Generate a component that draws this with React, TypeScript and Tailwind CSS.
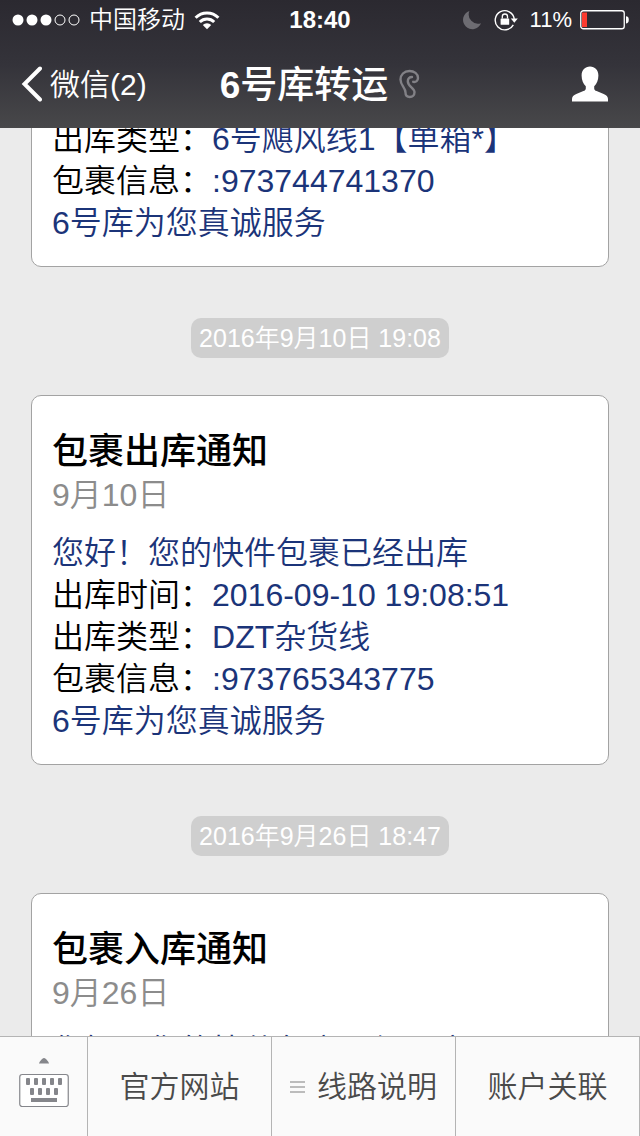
import type { ReactNode } from "react";

type Field = {
  label?: string;
  value: string;
};

type Notice = {
  id: string;
  title?: string;
  date?: string;
  time?: string;
  fields: Field[];
};

const notices: Notice[] = [
  {
    id: "n1",
    fields: [
      { label: "出库类型：", value: "6号飓风线1【单箱*】" },
      { label: "包裹信息：", value: ":973744741370" },
      { value: "6号库为您真诚服务" },
    ],
  },
  {
    id: "n2",
    time: "2016年9月10日 19:08",
    title: "包裹出库通知",
    date: "9月10日",
    fields: [
      { value: "您好！您的快件包裹已经出库" },
      { label: "出库时间：", value: "2016-09-10 19:08:51" },
      { label: "出库类型：", value: "DZT杂货线" },
      { label: "包裹信息：", value: ":973765343775" },
      { value: "6号库为您真诚服务" },
    ],
  },
  {
    id: "n3",
    time: "2016年9月26日 18:47",
    title: "包裹入库通知",
    date: "9月26日",
    fields: [{ value: "您好！您的快件包裹已经入库" }],
  },
];

function SignalDots() {
  return (
    <svg viewBox="0 0 68 12" className="h-3 w-[68px]" aria-hidden>
      <g fill="#fff">
        <circle cx="6" cy="6" r="5.5" />
        <circle cx="20" cy="6" r="5.5" />
        <circle cx="34" cy="6" r="5.5" />
      </g>
      <g fill="none" stroke="#fff" strokeWidth="1">
        <circle cx="48" cy="6" r="5" />
        <circle cx="62" cy="6" r="5" />
      </g>
    </svg>
  );
}

function WifiIcon() {
  return (
    <svg viewBox="0 0 26 20" className="h-5 w-[26px]" aria-hidden>
      <g fill="none" stroke="#fff" strokeWidth="3">
        <path d="M1.6 7.8a16 16 0 0 1 22.8 0" />
        <path d="M5.8 12a10.2 10.2 0 0 1 14.4 0" />
      </g>
      <path d="M8.8 15a6 6 0 0 1 8.4 0L13 19.2z" fill="#fff" />
    </svg>
  );
}

function MoonIcon() {
  return (
    <svg viewBox="0 0 20 20" className="mr-1 size-5" aria-hidden>
      <path
        d="M7.4 1A9.3 9.3 0 1 0 19 13.2 9.3 9.3 0 0 1 7.4 1z"
        fill="#6d6c72"
      />
    </svg>
  );
}

function RotationLockIcon() {
  return (
    <svg viewBox="0 0 24 22" className="h-[22px] w-6" aria-hidden>
      <path
        d="M19.3 15.8A9.6 9.6 0 1 1 20.3 9.8"
        fill="none"
        stroke="#fff"
        strokeWidth="1.4"
      />
      <path d="M16.8 9.6h7l-3.5 4.2z" fill="#fff" />
      <rect x="6.6" y="9.4" width="8.6" height="6.4" rx=".6" fill="#fff" />
      <path
        d="M8.3 9.6V7.6a2.6 2.6 0 0 1 5.2 0v2"
        fill="none"
        stroke="#fff"
        strokeWidth="1.3"
      />
    </svg>
  );
}

function BatteryIcon() {
  return (
    <svg viewBox="0 0 50 20" className="h-5 w-[50px]" aria-hidden>
      <rect
        x=".75"
        y=".75"
        width="43.5"
        height="18"
        rx="2.6"
        fill="none"
        stroke="#fff"
        strokeWidth="1.3"
      />
      <rect x="2" y="2.5" width="5" height="14.5" fill="#fb3b30" />
      <path d="M46 6.2c1.6 0 2.8.8 2.8 3.6s-1.2 3.6-2.8 3.6z" fill="#fff" />
    </svg>
  );
}

function EarIcon() {
  return (
    <svg viewBox="0 0 22 30" className="h-[30px] w-[22px]" aria-hidden>
      <path
        d="M15.2 12.8C18 13.4 20 11.600 20 9 20 4.800 16.200 2 11.500 2 6 2 2.500 5.800 2.500 10.500 2.500 16.500 7.500 18.500 7.500 23.500 7.500 26.500 9 28 11.800 28S16.500 26 16.500 23.300C16.500 19 9.800 17.500 9.800 12.200 9.800 9.500 11.500 8 14 8"
        fill="none"
        stroke="#828186"
        strokeWidth="2.4"
        strokeLinecap="round"
      />
    </svg>
  );
}

function PersonIcon() {
  return (
    <svg viewBox="0 0 36 36" className="size-9" aria-hidden>
      <path
        d="M18 .4c-4.900 0-8.400 3.600-8.400 9 0 4.600 1.700 8.700 4.200 10.800v2.200c0 1.300-.8 2-2.400 2.700L4.300 28C1.500 29.200 0 30.800 0 33v2.500h36V33c0-2.200-1.500-3.800-4.300-5l-7.100-2.900c-1.600-.7-2.400-1.400-2.400-2.700v-2.200c2.500-2.100 4.200-6.200 4.200-10.800 0-5.400-3.500-9-8.400-9z"
        fill="#fff"
      />
    </svg>
  );
}

function KeyboardIcon() {
  return (
    <svg viewBox="0 0 50 50" className="size-[50px]" aria-hidden>
      <path d="M20 6.500c0-1 3-5.500 5-5.500s5 4.500 5 5.500z" fill="#85868b" />
      <rect
        x=".75"
        y="17.500"
        width="48.500"
        height="32"
        rx="2.500"
        fill="#fff"
        stroke="#85868b"
        strokeWidth="1.200"
      />
      <g fill="#85868b">
        <rect x="7" y="21" width="4" height="7" rx="1" />
        <rect x="15" y="21" width="4" height="7" rx="1" />
        <rect x="23" y="21" width="4" height="7" rx="1" />
        <rect x="31" y="21" width="4" height="7" rx="1" />
        <rect x="39" y="21" width="4" height="7" rx="1" />
        <rect x="11" y="31" width="4" height="7" rx="1" />
        <rect x="19" y="31" width="4" height="7" rx="1" />
        <rect x="27" y="31" width="4" height="7" rx="1" />
        <rect x="35" y="31" width="4" height="7" rx="1" />
        <rect x="12" y="41" width="26" height="4" />
      </g>
    </svg>
  );
}

function StatusBar() {
  return (
    <div className="grid h-10 grid-cols-[1fr_auto_1fr] items-center px-2.5 text-2xl">
      <div className="flex items-center gap-[9px] pl-0.5">
        <SignalDots />
        <span className="font-[350]">中国移动</span>
        <WifiIcon />
      </div>
      <time className="font-bold">18:40</time>
      <div className="flex items-center justify-end gap-2">
        <MoonIcon />
        <RotationLockIcon />
        <span className="ml-1 text-[22px]">11%</span>
        <BatteryIcon />
      </div>
    </div>
  );
}

function NavBar() {
  return (
    <div className="grid h-[88px] grid-cols-[1fr_auto_1fr] items-center px-5">
      <button type="button" className="flex items-center gap-2 text-[30px]">
        <svg viewBox="0 0 22 36" className="h-9 w-[22px]" aria-hidden>
          <path
            d="M20 2.500 4.500 18 20 33.500"
            fill="none"
            stroke="#fff"
            strokeWidth="4"
            strokeLinecap="round"
          />
        </svg>
        <span className="font-[350]">微信(2)</span>
      </button>
      <div className="flex items-center gap-2.5">
        <h1 className="pt-1 text-[37px] leading-[44px] font-medium">
          <span className="font-bold">6</span>号库转运
        </h1>
        <EarIcon />
      </div>
      <button type="button" aria-label="联系人" className="mr-3 justify-self-end">
        <PersonIcon />
      </button>
    </div>
  );
}

function NoticeCard({ notice }: { notice: Notice }) {
  return (
    <article className="rounded-[10px] border border-[#a3a3a3] bg-white px-5 pt-[34px] pb-[22px] text-[32px] leading-[42px] font-[350]">
      {notice.title ? (
        <header className="mb-4">
          <h2 className="text-4xl leading-[44px] font-medium text-black">
            {notice.title}
          </h2>
          <p className="text-[#8c8c8c]">{notice.date}</p>
        </header>
      ) : null}
      {notice.fields.map((field) => (
        <p key={field.value} className="whitespace-nowrap text-[#1b3479]">
          {field.label ? (
            <span className="text-black">{field.label}</span>
          ) : null}
          {field.value}
        </p>
      ))}
    </article>
  );
}

function MenuButton({ children }: { children: ReactNode }) {
  return (
    <button
      type="button"
      className="flex flex-1 items-center justify-center gap-3 border-r border-[#b4b4b4]"
    >
      {children}
    </button>
  );
}

export default function App() {
  return (
    <div className="flex h-screen flex-col overflow-hidden bg-[#ebebeb] font-['Liberation_Sans','Noto_Sans_CJK_SC',sans-serif]">
      <header className="z-10 shrink-0 bg-linear-to-b from-[#2b2930] via-[#34333a] to-[#48484a] text-white">
        <StatusBar />
        <NavBar />
      </header>

      <main className="min-h-0 flex-1 overflow-hidden px-[31px]">
        {/* scrolled part way into the first notice */}
        <div className="-mt-[45px]">
          {notices.map((notice) => (
            <section key={notice.id}>
              {notice.time ? (
                <div className="flex justify-center pt-[51px] pb-[37px]">
                  <time className="rounded-[10px] bg-[#cfcfcf] px-2 text-[25px] leading-10 font-[350] text-white">
                    {notice.time}
                  </time>
                </div>
              ) : null}
              <NoticeCard notice={notice} />
            </section>
          ))}
        </div>
      </main>

      <nav className="flex h-[100px] shrink-0 border-t border-[#b4b4b4] bg-[#fafafa] text-[30px] font-[350] text-[#4a4a4a]">
        <button
          type="button"
          aria-label="键盘"
          className="flex w-[88px] shrink-0 items-center justify-center border-r border-[#b4b4b4] pb-2.5"
        >
          <KeyboardIcon />
        </button>
        <MenuButton>官方网站</MenuButton>
        <MenuButton>
          <svg viewBox="0 0 15 12" className="h-3 w-[15px]" aria-hidden>
            <path d="M0 1h15M0 6h15M0 11h15" stroke="#bcbcbc" strokeWidth="2" />
          </svg>
          线路说明
        </MenuButton>
        <MenuButton>账户关联</MenuButton>
      </nav>
    </div>
  );
}
